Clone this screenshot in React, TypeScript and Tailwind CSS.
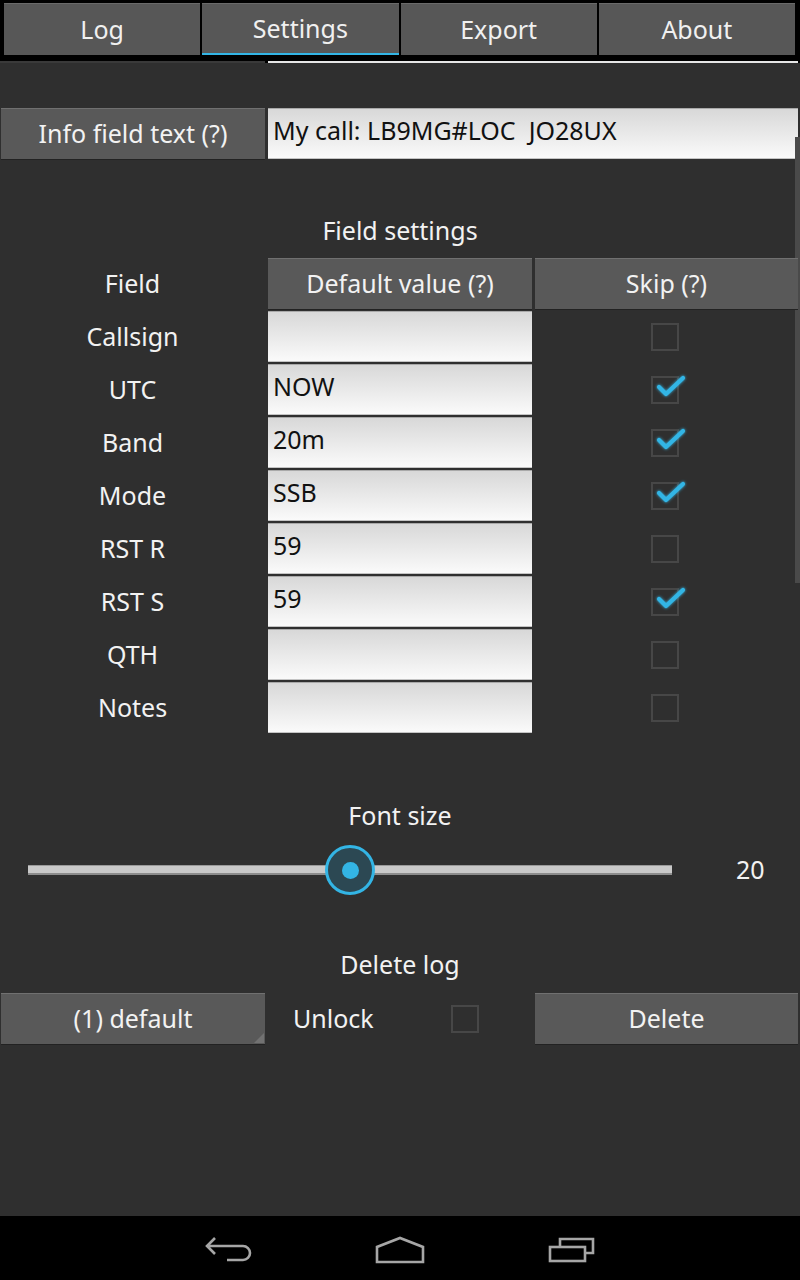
import React from "react";

const font = { fontFamily: '"Noto Sans", "Open Sans", "DejaVu Sans", sans-serif' };

function Btn({ children, className = "" }: { children: React.ReactNode; className?: string }) {
  return (
    <div
      className={
        "relative flex items-center justify-center bg-[#595959] text-[#f2f2f2] text-[25px] shadow-[inset_0_1px_0_#707070,0_1px_0_#222222] " +
        className
      }
    >
      {children}
    </div>
  );
}

function Input({ value, className = "" }: { value: string; className?: string }) {
  return (
    <div
      className={
        "flex items-center pb-[6px] pl-[5px] whitespace-pre bg-gradient-to-b from-[#d8d8d8] to-[#fbfbfb] border-t border-[#a9a9a9] shadow-[inset_0_-1px_0_#c4c4c4] text-[#111111] text-[25px] " +
        className
      }
    >
      {value}
    </div>
  );
}

function Check({ checked }: { checked: boolean }) {
  return (
    <div className="relative w-[28px] h-[28px] border-2 border-[#474747]">
      {checked && (
        <svg
          className="absolute left-[2px] top-[-11px] overflow-visible"
          width="32"
          height="32"
          viewBox="0 0 32 32"
        >
          <defs>
            <filter id="glow" x="-50%" y="-50%" width="200%" height="200%">
              <feGaussianBlur stdDeviation="1.6" result="b" />
              <feMerge>
                <feMergeNode in="b" />
                <feMergeNode in="SourceGraphic" />
              </feMerge>
            </filter>
          </defs>
          <path
            d="M4 20 L11 27 L28 11"
            fill="none"
            stroke="#33b5e5"
            strokeWidth="4.2"
            strokeLinecap="round"
            strokeLinejoin="round"
            filter="url(#glow)"
          />
        </svg>
      )}
    </div>
  );
}

const rows: { name: string; value: string; skip: boolean }[] = [
  { name: "Callsign", value: "", skip: false },
  { name: "UTC", value: "NOW", skip: true },
  { name: "Band", value: "20m", skip: true },
  { name: "Mode", value: "SSB", skip: true },
  { name: "RST R", value: "59", skip: false },
  { name: "RST S", value: "59", skip: true },
  { name: "QTH", value: "", skip: false },
  { name: "Notes", value: "", skip: false },
];

export default function App() {
  return (
    <div className="w-[800px] h-[1280px] flex flex-col bg-[#2f2f2f] overflow-hidden" style={font}>
      {/* Tab header */}
      <div className="h-[63px] bg-black flex flex-col">
        <div className="flex gap-[2px] pt-[3px] pl-[4px] pr-[5px] h-[55px]">
          {["Log", "Settings", "Export", "About"].map((t) => (
            <div
              key={t}
              className={
                "flex-1 flex items-center justify-center bg-[#575757] text-[#f0f0f0] text-[25px] pt-[2px] shadow-[inset_0_1px_0_#6a6a6a] " +
                (t === "Settings" ? "border-b-2 border-[#33b5e5]" : "")
              }
            >
              {t}
            </div>
          ))}
        </div>
        <div className="flex gap-[3px] mt-[6px] pr-[2px] h-[2px]">
          <div className="w-[265px] bg-[#3a3a3a]" />
          <div className="flex-1 bg-[#e6e6e6]" />
        </div>
      </div>

      {/* Content */}
      <div className="relative flex-1 flex flex-col">
        <div className="absolute right-0 top-[74px] w-[5px] h-[446px] bg-[#4a4a4a]" />

        <div className="flex gap-[3px] mt-[45px] pl-[1px] pr-[2px] h-[51px]">
          <Btn className="w-[264px]">Info field text (?)</Btn>
          <Input className="flex-1" value="My call: LB9MG#LOC  JO28UX" />
        </div>

        <div className="mt-[56px] h-[32px] flex items-center justify-center text-[#f2f2f2] text-[25px]">
          Field settings
        </div>

        <div className="mt-[11px] grid grid-cols-[265px_264px_1fr] gap-x-[3px] gap-y-[2px] pr-[2px]">
          <div className="h-[51px] flex items-center justify-center text-[#f2f2f2] text-[25px]">Field</div>
          <Btn className="h-[51px]">Default value (?)</Btn>
          <Btn className="h-[51px]">Skip (?)</Btn>
          {rows.map((r) => (
            <React.Fragment key={r.name}>
              <div className="h-[51px] flex items-center justify-center text-[#f2f2f2] text-[25px]">{r.name}</div>
              <Input className="h-[51px]" value={r.value} />
              <div className="h-[51px] flex items-center justify-center pr-[3px]">
                <Check checked={r.skip} />
              </div>
            </React.Fragment>
          ))}
        </div>

        <div className="mt-[67px] h-[32px] flex items-center justify-center text-[#f2f2f2] text-[25px]">
          Font size
        </div>

        <div className="mt-[13px] h-[50px] flex items-center pl-[28px]">
          <div className="relative w-[644px] h-[10px] bg-[#c9c9c9] border-t border-[#9a9a9a] border-b-2 border-b-[#8c8c8c]">
            <div className="absolute left-[297px] top-[-21px] w-[50px] h-[50px] rounded-full border-[3px] border-[#33b5e5] bg-[#2c4853] flex items-center justify-center">
              <div className="w-[17px] h-[17px] rounded-full bg-[#33b5e5]" />
            </div>
          </div>
          <div className="ml-[64px] text-[#f2f2f2] text-[25px]">20</div>
        </div>

        <div className="mt-[54px] h-[32px] flex items-center justify-center text-[#f2f2f2] text-[25px]">
          Delete log
        </div>

        <div className="mt-[12px] flex gap-[3px] pl-[1px] pr-[2px] h-[51px]">
          <Btn className="w-[264px]">
            (1) default
            <svg className="absolute right-[1px] bottom-[1px]" width="10" height="10" viewBox="0 0 10 10">
              <path d="M10 0 L10 10 L0 10 Z" fill="#727272" />
            </svg>
          </Btn>
          <div className="w-[264px] flex items-center">
            <span className="ml-[25px] text-[#f2f2f2] text-[25px]">Unlock</span>
            <div className="ml-[77px]">
              <Check checked={false} />
            </div>
          </div>
          <Btn className="flex-1">Delete</Btn>
        </div>
      </div>

      {/* Navigation bar */}
      <div className="h-[64px] bg-black flex items-center justify-center gap-[122px]">
        <svg width="48" height="30" viewBox="0 0 48 30" className="mt-[4px]">
          <path
            d="M10 3 L2 11 L10 19 M3 11 L38 11 A7 7 0 0 1 38 25 L22 25"
            fill="none"
            stroke="#a6a6a6"
            strokeWidth="2.6"
          />
        </svg>
        <svg width="50" height="30" viewBox="0 0 50 30" className="mt-[4px]">
          <path d="M2 27 L2 12 L25 3 L48 12 L48 27 Z" fill="none" stroke="#a6a6a6" strokeWidth="2.6" />
        </svg>
        <svg width="48" height="30" viewBox="0 0 48 30" className="mt-[4px] ml-[1px]">
          <rect x="2" y="12" width="35" height="14" fill="none" stroke="#a6a6a6" strokeWidth="2.6" />
          <path d="M12 11 L12 4 L45 4 L45 18 L38 18" fill="none" stroke="#a6a6a6" strokeWidth="2.6" />
        </svg>
      </div>
    </div>
  );
}
